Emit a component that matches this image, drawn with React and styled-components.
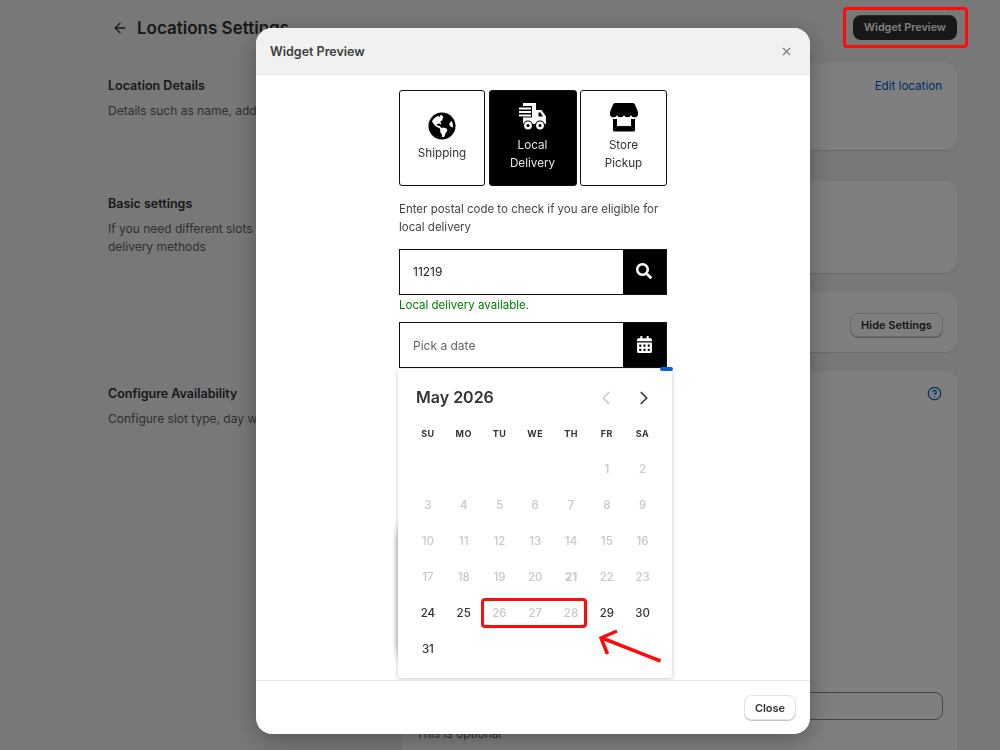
import React from "react";
import styled, { createGlobalStyle } from "styled-components";
import { FaGlobeAmericas, FaSearch, FaCalendarAlt } from "react-icons/fa";
import { X, ArrowLeft, ChevronLeft, ChevronRight, CircleHelp } from "lucide-react";

const GlobalStyle = createGlobalStyle`
  html, body {
    margin: 0;
    height: 100%;
    overflow: hidden;
  }
  body {
    font-family: Inter, "Liberation Sans", sans-serif;
    color: #303030;
    background: #f1f1f1;
  }
  * {
    box-sizing: border-box;
  }
`;

const weekdays = ["SU", "MO", "TU", "WE", "TH", "FR", "SA"];
const enabledDays = [24, 25, 29, 30, 31];
const days = [...Array(5).fill(null), ...Array.from({ length: 31 }, (_, i) => i + 1)];

const TruckIcon = () => (
  <svg width="30" height="30" viewBox="3 4 30 30" fill="#fff">
    <path d="M8 5 H21 V12 H26.5 L31 18.5 V26 H8 V19.5 H17 V8 H8 Z" />
    <rect x="4" y="9.5" width="12" height="2" />
    <rect x="4" y="13" width="12" height="2" />
    <rect x="4" y="16.5" width="12" height="2" />
    <path d="M23.5 14.5 H25.5 L28 18.5 H23.5 Z" fill="#000" />
    <circle cx="13" cy="27.5" r="5" fill="#000" />
    <circle cx="13" cy="27.5" r="3.9" />
    <circle cx="13" cy="27.5" r="1.5" fill="#000" />
    <circle cx="25" cy="27.5" r="5" fill="#000" />
    <circle cx="25" cy="27.5" r="3.9" />
    <circle cx="25" cy="27.5" r="1.5" fill="#000" />
  </svg>
);

const StoreIcon = () => (
  <svg width="30" height="30" viewBox="3 4 30 30" fill="#000">
    <path d="M9 5 H27 Q28.5 5 29 6.5 L32 14 V16 A3.5 3.2 0 0 1 25 16 A3.5 3.2 0 0 1 18 16 A3.5 3.2 0 0 1 11 16 A3.5 3.2 0 0 1 4 16 V14 L7 6.5 Q7.5 5 9 5 Z" />
    <path d="M7 21 H11 V28 H25 V21 H29 V32 Q29 33.5 27.5 33.5 H8.5 Q7 33.5 7 32 Z" />
  </svg>
);

const App = () => {
  return (
    <>
      <GlobalStyle />
      <Page>
        <PageHeader>
          <BackTitle>
            <ArrowLeft size={16} strokeWidth={2} />
            <h1>Locations Settings</h1>
          </BackTitle>
          <PrimaryButton>Widget Preview</PrimaryButton>
        </PageHeader>
        <Section $gap="31px">
          <SectionInfo>
            <h2>Location Details</h2>
            <p>Details such as name, address</p>
          </SectionInfo>
          <Card $height="87px" $align="flex-end">
            <CardLink>Edit location</CardLink>
          </Card>
        </Section>
        <Section>
          <SectionInfo>
            <h2>Basic settings</h2>
            <p>If you need different slots for different delivery methods</p>
          </SectionInfo>
          <Card $height="92px" />
        </Section>
        <Section>
          <div />
          <Card $height="60px" $align="flex-end">
            <SecondaryButton>Hide Settings</SecondaryButton>
          </Card>
        </Section>
        <Section>
          <SectionInfo>
            <h2>Configure Availability</h2>
            <p>Configure slot type, day wise availability</p>
          </SectionInfo>
          <Card $align="flex-end">
            <HelpLink>
              <CircleHelp size={15} strokeWidth={2} />
            </HelpLink>
            <OptionalField>
              <FakeInput />
              <small>This is optional</small>
            </OptionalField>
          </Card>
        </Section>
      </Page>

      <Backdrop>
        <Modal>
          <ModalHeader>
            <h3>Widget Preview</h3>
            <X size={13} strokeWidth={2} />
          </ModalHeader>
          <ModalBody>
            <Widget>
              <MethodGrid>
                <MethodTile>
                  <FaGlobeAmericas size={28} />
                  <span>Shipping</span>
                </MethodTile>
                <MethodTile $active>
                  <TruckIcon />
                  <span>
                    Local
                    <br />
                    Delivery
                  </span>
                </MethodTile>
                <MethodTile $lift="1px">
                  <StoreIcon />
                  <span>
                    Store
                    <br />
                    Pickup
                  </span>
                </MethodTile>
              </MethodGrid>
              <Hint>Enter postal code to check if you are eligible for local delivery</Hint>
              <InputRow>
                <TextInput>11219</TextInput>
                <InputAddon>
                  <FaSearch size={16} />
                </InputAddon>
              </InputRow>
              <Status>Local delivery available.</Status>
              <DateWrap>
                <InputRow>
                  <TextInput $placeholder>Pick a date</TextInput>
                  <InputAddon>
                    <FaCalendarAlt size={17} />
                  </InputAddon>
                </InputRow>
                <ScrollMark />
                <Calendar>
                  <CalendarHead>
                    <strong>May 2026</strong>
                    <CalendarNav>
                      <ChevronLeft size={22} strokeWidth={1.8} color="#c9c9c9" />
                      <ChevronRight size={22} strokeWidth={1.8} color="#333" />
                    </CalendarNav>
                  </CalendarHead>
                  <DayGrid>
                    {weekdays.map((d) => (
                      <Weekday key={d}>{d}</Weekday>
                    ))}
                    {days.map((d, i) => (
                      <Day key={i} $enabled={enabledDays.includes(d)} $today={d === 21}>
                        {d}
                      </Day>
                    ))}
                  </DayGrid>
                </Calendar>
              </DateWrap>
            </Widget>
          </ModalBody>
          <ModalFooter>
            <CloseButton>Close</CloseButton>
          </ModalFooter>
        </Modal>
      </Backdrop>

      <RedBox $left="843px" $top="7px" $width="125px" $height="41px" />
      <RedBox $left="481px" $top="598px" $width="106px" $height="30px" />
      <Arrow viewBox="0 0 70 40" fill="none" stroke="#fb0d0d" strokeWidth="3.5">
        <path d="M61.5 32 L3 9" />
        <path d="M18 2 L2 9 L8.5 25" />
      </Arrow>
    </>
  );
};

export default App;

const Page = styled.div`
  padding: 15px 43px 0 108px;
  height: 100vh;
  overflow: hidden;
`;

const PageHeader = styled.header`
  display: flex;
  justify-content: space-between;
  align-items: center;
  height: 25px;
  margin-bottom: 23px;
`;

const BackTitle = styled.div`
  display: flex;
  align-items: center;
  gap: 9px;
  padding-left: 4px;

  h1 {
    margin: 0;
    font-size: 17px;
    font-weight: 600;
  }
`;

const PrimaryButton = styled.button`
  width: 104px;
  height: 25px;
  border: 0;
  border-radius: 8px;
  background: #303030;
  color: #fff;
  font: 600 10.8px Inter, sans-serif;
  box-shadow: inset 0 1px 0 rgba(255, 255, 255, 0.18);
`;

const Section = styled.section`
  display: grid;
  grid-template-columns: 294px 1fr;
  margin-bottom: ${(p) => p.$gap || "19px"};
`;

const SectionInfo = styled.div`
  padding-top: 15px;
  padding-right: 60px;

  h2 {
    margin: 0 0 8px;
    font-size: 12.5px;
    line-height: 16px;
    font-weight: 600;
  }

  p {
    margin: 0;
    font-size: 12px;
    line-height: 18px;
    color: #616161;
  }
`;

const Card = styled.div`
  display: flex;
  flex-direction: column;
  align-items: ${(p) => p.$align || "stretch"};
  height: ${(p) => p.$height || "600px"};
  padding: 14px;
  border-radius: 12px;
  background: #fff;
  box-shadow: 0 1px 1px rgba(0, 0, 0, 0.12);
`;

const CardLink = styled.a`
  margin: 1px 1px 0 0;
  font-size: 11.6px;
  line-height: 16px;
  color: #005bd3;
`;

const SecondaryButton = styled.button`
  width: 93px;
  height: 24px;
  margin-top: 7px;
  border: 1px solid #d4d4d4;
  border-radius: 8px;
  background: #fff;
  color: #303030;
  font: 600 11px Inter, sans-serif;
  box-shadow: 0 1px 0 #b5b5b5;
`;

const HelpLink = styled.span`
  display: flex;
  margin: 1px 1px 0 0;
  color: #005bd3;
`;

const OptionalField = styled.div`
  width: 100%;
  margin-top: 291px;

  small {
    display: block;
    margin-top: 6px;
    font-size: 12px;
    color: #616161;
  }
`;

const FakeInput = styled.div`
  height: 28px;
  border: 1px solid #8a8a8a;
  border-radius: 8px;
`;

const Backdrop = styled.div`
  position: fixed;
  inset: 0;
  padding: 28px 190px 16px 256px;
  background: rgba(0, 0, 0, 0.5);
`;

const Modal = styled.div`
  display: flex;
  flex-direction: column;
  height: 100%;
  border-radius: 16px;
  overflow: hidden;
  background: #fff;
  box-shadow: 0 6px 24px rgba(0, 0, 0, 0.3);
`;

const ModalHeader = styled.div`
  display: flex;
  justify-content: space-between;
  align-items: center;
  flex: 0 0 47px;
  padding: 0 17px 0 14px;
  background: #f1f1f1;
  border-bottom: 1px solid #e6e6e6;
  color: #7a7a7a;

  h3 {
    margin: 0;
    font-size: 12.5px;
    font-weight: 600;
    color: #3c3c3c;
  }
`;

const ModalBody = styled.div`
  flex: 1;
  display: flex;
  justify-content: center;
  padding-top: 15px;
  overflow: hidden;
`;

const Widget = styled.div`
  width: 268px;
`;

const MethodGrid = styled.div`
  display: grid;
  grid-template-columns: 86px 88px 87px;
  justify-content: space-between;
  height: 96px;
`;

const MethodTile = styled.div`
  display: flex;
  flex-direction: column;
  align-items: center;
  justify-content: center;
  gap: 4px;
  padding-top: ${(p) => p.$lift || "0"};
  padding-bottom: 3px;
  border: 1px solid #111;
  border-radius: 3px;
  background: ${(p) => (p.$active ? "#000" : "#fff")};
  color: ${(p) => (p.$active ? "#fff" : "#000")};

  span {
    font-size: 11.7px;
    line-height: 18px;
    text-align: center;
    color: ${(p) => (p.$active ? "#e6e6e6" : "#303030")};
  }
`;

const Hint = styled.p`
  margin: 14px 0 13px;
  font-size: 11.5px;
  line-height: 18px;
  color: #444;
`;

const InputRow = styled.div`
  display: flex;
  height: 46px;
  border: 1px solid #111;
`;

const TextInput = styled.div`
  flex: 1;
  display: flex;
  align-items: center;
  padding-left: 13px;
  padding-bottom: ${(p) => (p.$placeholder ? "0" : "2px")};
  font-size: 12px;
  color: ${(p) => (p.$placeholder ? "#666" : "#222")};
`;

const InputAddon = styled.div`
  display: flex;
  align-items: center;
  justify-content: center;
  width: 43px;
  padding: 0 1px 2px 0;
  background: #000;
  color: #fff;
`;

const Status = styled.div`
  margin: 2px 0 9px;
  font-size: 11.5px;
  line-height: 16px;
  color: #008000;
`;

const DateWrap = styled.div`
  position: relative;
`;

const ScrollMark = styled.span`
  position: absolute;
  z-index: 2;
  top: 45px;
  right: -6px;
  width: 13px;
  height: 4px;
  border-radius: 2px;
  background: #0a62d0;
`;

const Calendar = styled.div`
  position: absolute;
  top: 100%;
  left: -1px;
  width: 274px;
  height: 309px;
  padding: 12px 11.5px 12px 12px;
  margin-top: 1px;
  background: #fff;
  border-radius: 3px;
  box-shadow: 0 1px 4px rgba(0, 0, 0, 0.22);

  /* the shadow of the hidden panel behind, it only shows on the left */
  &::before {
    content: "";
    position: absolute;
    left: -6px;
    top: 150px;
    width: 6px;
    height: 146px;
    background: linear-gradient(to right, transparent, rgba(0, 0, 0, 0.2));
    mask-image: linear-gradient(to bottom, transparent, #000 15%, #000 85%, transparent);
  }
`;

const CalendarHead = styled.div`
  display: flex;
  justify-content: space-between;
  align-items: center;
  height: 32px;
  margin-bottom: 2px;
  padding: 0 6px;

  strong {
    font-size: 16px;
    font-weight: 600;
    color: #333;
  }
`;

const CalendarNav = styled.div`
  display: flex;
  gap: 16px;
  padding-top: 1px;
`;

const DayGrid = styled.div`
  display: grid;
  grid-template-columns: repeat(7, 1fr);
  grid-auto-rows: 36px;
`;

const Weekday = styled.div`
  display: flex;
  align-items: center;
  justify-content: center;
  font-size: 9px;
  font-weight: 700;
  letter-spacing: 0.5px;
  color: #333;
`;

const Day = styled.div`
  display: flex;
  align-items: center;
  justify-content: center;
  font-size: 11.5px;
  font-weight: ${(p) => (p.$today ? 700 : 500)};
  color: ${(p) => (p.$enabled ? "#333" : "#c8c8c8")};
`;

const ModalFooter = styled.div`
  flex: 0 0 54px;
  display: flex;
  justify-content: flex-end;
  align-items: center;
  padding-right: 14px;
  border-top: 1px solid #e6e6e6;
`;

const CloseButton = styled.button`
  width: 52px;
  height: 25px;
  border: 1px solid #e3e3e3;
  border-radius: 8px;
  background: #fff;
  color: #303030;
  font: 600 11px Inter, sans-serif;
  box-shadow: 0 1px 0 #c4c4c4;
`;

const RedBox = styled.div`
  position: fixed;
  left: ${(p) => p.$left};
  top: ${(p) => p.$top};
  width: ${(p) => p.$width};
  height: ${(p) => p.$height};
  border: 3px solid #fb0d0d;
  border-radius: 4px;
`;

const Arrow = styled.svg`
  position: fixed;
  left: 599px;
  top: 629px;
  width: 70px;
  height: 40px;
`;
